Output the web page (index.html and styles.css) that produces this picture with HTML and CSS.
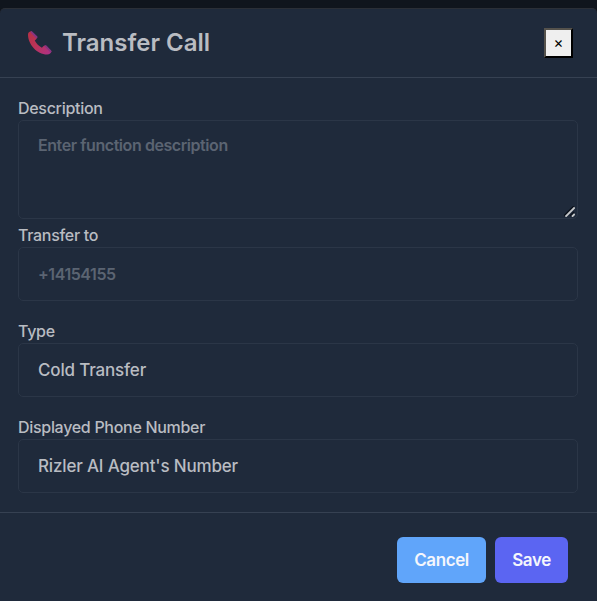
FILE: index.html
```html
<!DOCTYPE html>
<html lang="en">
<head>
<meta charset="utf-8">
<title>Transfer Call</title>
<link rel="stylesheet" href="styles.css">
</head>
<body>
<form class="modal">
  <header class="modal-header">
    <svg class="phone" viewBox="0 0 24 24" aria-hidden="true">
      <defs>
        <linearGradient id="body" x1="0" y1="0" x2="1" y2="1">
          <stop offset="0" stop-color="#b63045"/>
          <stop offset=".5" stop-color="#b93459"/>
          <stop offset="1" stop-color="#ad3089"/>
        </linearGradient>
      </defs>
      <path fill="url(#body)" d="M0 3.2C0 1.8 1.4.6 3 .2L9 6.6C9.2 8 7.6 9 6.9 9.8C8.6 13 11 15.4 14.2 17.2C15.3 16.2 16.2 14.6 17.8 14.8L24 20.8C23.6 22.6 22 24 19.6 24C9 23.8-.2 13.4 0 3.2Z"/>
      <path fill="#883481" d="M3 .2Q3.7-.2 4.3.4L9.6 5.6Q10 6.2 9.5 7L8.6 7.7L2.6 1.5Z"/>
      <path fill="#883481" d="M16.6 15.4L17.4 14.6Q18.1 14.2 18.8 14.8L23.7 19.8Q24.2 20.4 23.8 21.3L23 22Z"/>
    </svg>
    <h1 class="title">Transfer Call</h1>
    <button type="button" class="close">×</button>
  </header>
  <div class="modal-body">
    <div class="field field-tight">
      <label class="label" for="description">Description</label>
      <div class="area-wrap">
        <textarea class="control control-area" id="description" placeholder="Enter function description"></textarea>
        <svg class="grip" viewBox="0 0 11 11" aria-hidden="true">
          <path stroke="#0b111b" stroke-width="1.6" d="M0 10L10 0M6 10L10 6"/>
          <path stroke="#c6c8ca" stroke-width="1.8" d="M1.5 10.7L10.7 1.5M8 10.7L10.7 8"/>
        </svg>
      </div>
    </div>
    <div class="field">
      <label class="label" for="number">Transfer to</label>
      <input class="control" id="number" placeholder="+14154155">
    </div>
    <div class="field">
      <label class="label" for="type">Type</label>
      <select class="control control-select" id="type"><option>Cold Transfer</option></select>
    </div>
    <div class="field">
      <label class="label" for="displayed">Displayed Phone Number</label>
      <select class="control control-select" id="displayed"><option>Rizler AI Agent's Number</option></select>
    </div>
  </div>
  <footer class="modal-footer">
    <button type="button" class="btn btn-cancel">Cancel</button>
    <button type="button" class="btn btn-save">Save</button>
  </footer>
</form>
</body>
</html>
```
FILE: styles.css
```css
* { box-sizing: border-box; }

body {
  margin: 0;
  padding-top: 8px;
  height: 601px;
  overflow: hidden;
  background: #10151d;
  color: #b9bcc2;
  font-family: Inter, sans-serif;
}

.modal {
  display: flex;
  flex-direction: column;
  height: 593px;
  background: #1f2a3b;
  border-top: 1px solid #2b2f37;
  border-radius: 5px 5px 0 0;
}

.modal-header {
  display: flex;
  align-items: center;
  height: 69px;
  padding: 0 24px 0 28px;
  border-bottom: 1px solid #364152;
}

.phone {
  width: 23.5px;
  height: 23.5px;
  margin: -1px 10.5px 0 0;
  overflow: visible;
}

.title {
  flex: 1;
  margin: 0;
  font-size: 24px;
  line-height: 36px;
  font-weight: 600;
}

.close {
  width: 29px;
  height: 30px;
  padding: 0;
  border: 2px outset #000;
  border-color: #55524c #000 #000 #55524c;
  background: #efefef;
  color: #000;
  font: 400 15px/24px Inter, sans-serif;
}

.modal-body {
  padding: 18px 19px 0 18px;
  height: 434px;
}

.field { margin-bottom: 18px; }

.field-tight { margin-bottom: 4px; }

.label {
  display: block;
  height: 24px;
  font-size: 16px;
  line-height: 24px;
  font-weight: 500;
  letter-spacing: -.3px;
}

.control {
  display: block;
  appearance: none;
  width: 100%;
  height: 54px;
  margin: 0;
  padding: 0 19px;
  border: 1px solid #2b3647;
  border-radius: 5px;
  outline: none;
  background: #1f2a3b;
  color: #b9bcc2;
  font: 600 16px/24px Inter, sans-serif;
  letter-spacing: -.43px;
}

.control::placeholder { color: #5b6472; opacity: 1; }

.area-wrap { position: relative; }

.control-area {
  height: 99px;
  padding: 12px 19px;
  resize: none;
}

.grip {
  position: absolute;
  right: 3px;
  bottom: 2px;
  width: 11px;
  height: 11px;
}

.control-select {
  font-size: 17px;
  font-weight: 500;
  letter-spacing: -.17px;
}

.modal-footer {
  display: flex;
  flex: 1;
  align-items: flex-start;
  justify-content: flex-end;
  gap: 9px;
  padding: 24px 29px 0;
  border-top: 1px solid #364152;
}

.btn {
  height: 46px;
  padding: 0;
  border: 0;
  border-radius: 6px;
  color: #f4f6fc;
  font: 600 17px/24px Inter, sans-serif;
  letter-spacing: -.4px;
}

.btn-cancel { width: 89px; background: #60a5fa; }

.btn-save { width: 73px; background: #5b65f2; }
```
